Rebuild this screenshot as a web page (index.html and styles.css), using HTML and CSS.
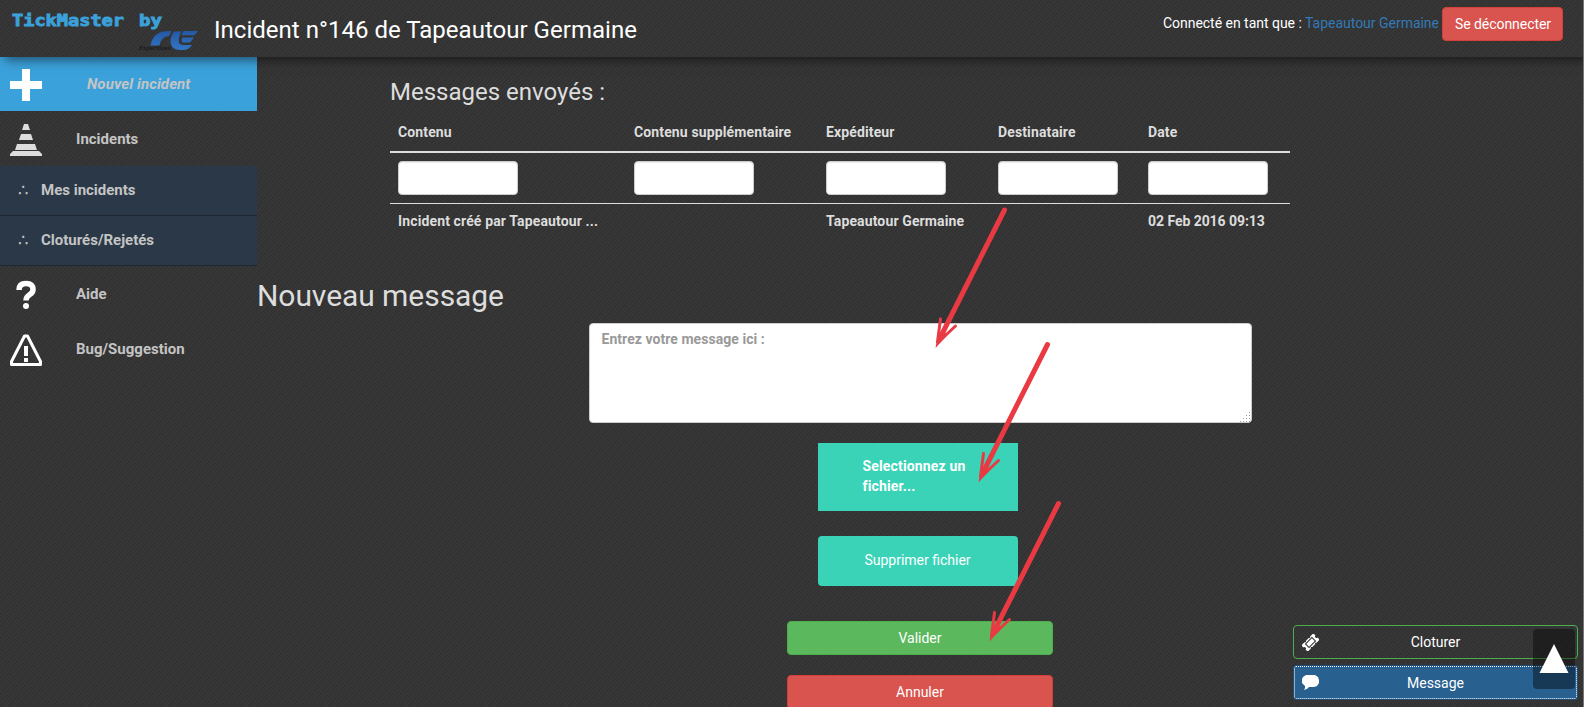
FILE: index.html
```html
<!DOCTYPE html>
<html lang="fr">
<head>
<meta charset="utf-8">
<title>TickMaster</title>
<link rel="stylesheet" href="styles.css">
</head>
<body>
<header class="topbar">
  <svg class="logo" width="202" height="57" viewBox="0 0 202 57">
    <text class="brand" x="12" y="26" textLength="112" lengthAdjust="spacingAndGlyphs">TickMaster</text>
    <text class="brand" x="139" y="26" textLength="23" lengthAdjust="spacingAndGlyphs">by</text>
    <defs><linearGradient id="cle" gradientUnits="userSpaceOnUse" x1="0" y1="31" x2="0" y2="50"><stop offset="0" stop-color="#2457a4"/><stop offset="1" stop-color="#3476c4"/></linearGradient></defs>
    <g fill="url(#cle)">
      <path d="M150.500 45.500Q152 34 163 31.500L171.500 31 169 36Q161 36.500 159.500 45.500z"/>
      <path d="M174 31.500h7.500Q178 38 179 42.500 180 45 184 45H192Q189 50 183 50H179Q171 49 170.500 42 170.500 36 174 31.500z"/>
      <path d="M183.500 31H198.500L194.500 35.200H181.500zM182.500 37.500H194L190 42.500H182Q181 40 182.500 37.500z"/>
    </g>
    <text class="tagline" x="139" y="50" textLength="32" lengthAdjust="spacingAndGlyphs">Expertises</text>
  </svg>
  <h1 class="page-title">Incident n°146 de Tapeautour Germaine</h1>
  <div class="session">
    <span class="who">Connecté en tant que : <a>Tapeautour Germaine</a></span>
    <button class="btn danger logout">Se déconnecter</button>
  </div>
</header>
<div class="layout">
  <nav class="sidebar">
    <a class="item active">
      <svg width="32" height="32" viewBox="0 0 32 32"><path fill="#fff" d="M12 0h8v12h12v8H20v12h-8V20H0v-8h12z"/></svg>
      <span>Nouvel incident</span>
    </a>
    <a class="item">
      <svg width="32" height="32" viewBox="0 0 32 32"><g fill="#ddd"><path d="M14 0h4l2 6h-8zM11 10h10l2 6H9zM7 20h18l2 6H5zM3 27h26l3 3v2H0v-2z"/></g></svg>
      <span>Incidents</span>
    </a>
    <a class="sub"><i>∴</i>Mes incidents</a>
    <a class="sub"><i>∴</i>Cloturés/Rejetés</a>
    <a class="item">
      <svg width="32" height="32" viewBox="0 0 32 32"><path fill="none" stroke="#fff" stroke-width="5.5" d="M9 11q0-6.500 7-6.500t7 6q0 3-3.500 5.300T16 21.500"/><circle cx="16" cy="27" r="3" fill="#fff"/></svg>
      <span>Aide</span>
    </a>
    <a class="item">
      <svg width="32" height="32" viewBox="0 0 32 32"><path fill="none" stroke="#fff" stroke-width="3" stroke-linejoin="round" d="M14.500 2h3L30.500 27.500v3h-29v-3z"/><path fill="#fff" d="M14 12h4v10h-4zM14 24h4v4h-4z"/></svg>
      <span>Bug/Suggestion</span>
    </a>
  </nav>
  <main class="content">
    <section class="messages">
      <h3>Messages envoyés :</h3>
      <div class="row head"><span>Contenu</span><span>Contenu supplémentaire</span><span>Expéditeur</span><span>Destinataire</span><span>Date</span></div>
      <div class="row filters"><span><input></span><span><input></span><span><input></span><span><input></span><span><input></span></div>
      <div class="row entry"><span>Incident créé par Tapeautour ...</span><span></span><span>Tapeautour Germaine</span><span></span><span class="date">02 Feb 2016 09:13</span></div>
    </section>
    <h2>Nouveau message</h2>
    <form class="compose">
      <div class="field">
        <textarea placeholder="Entrez votre message ici :"></textarea>
        <svg class="grip" width="11" height="11" viewBox="0 0 11 11"><path stroke="#999" stroke-dasharray="1 2" d="M9.500 1v10M6.500 4v7M3.500 7v4M.5 10v1"/></svg>
      </div>
      <label class="file">Selectionnez un fichier...</label>
      <button type="button" class="remove">Supprimer fichier</button>
      <button type="button" class="btn success wide">Valider</button>
      <button type="button" class="btn danger wide">Annuler</button>
    </form>
  </main>
</div>
<aside class="actions">
  <button class="btn close">
    <svg width="17" height="17" viewBox="0 0 17 17"><g transform="rotate(-45 8.500 8.500)"><path fill="#fff" d="M0 4h4.500l1 1 1-1h4l1 1 1-1H17v3a1.500 1.500 0 0 0 0 3v3h-4.500l-1-1-1 1h-4l-1-1-1 1H0v-3a1.500 1.500 0 0 0 0-3z"/><rect x="4" y="6" width="9" height="5" fill="none" stroke="#333"/></g></svg>
    <span>Cloturer</span>
  </button>
  <button class="btn message">
    <svg width="17" height="17" viewBox="0 0 17 17"><path fill="#fff" d="M4 1h9l3 2 1 3v3l-2 3-3 1H7q-1 2-5 3 1.500-2 1-4L0 9V5l1-2z"/></svg>
    <span>Message</span>
  </button>
</aside>
<a class="to-top"><svg width="30" height="30" viewBox="0 0 30 30"><path fill="#fff" d="M15 0L29.500 29H.5z"/></svg></a>
<svg class="arrows" width="1584" height="707" viewBox="0 0 1584 707">
  <defs>
    <g id="arrow" fill="none" stroke="#e93a43" stroke-linecap="round">
      <path stroke-width="5" d="M69-137L6-12"/>
      <path stroke-width="3" d="M5-28L2-5M20-21L3-5"/>
      <path fill="#e93a43" stroke="none" d="M0 1L2-11 8-16 12-12z"/>
    </g>
  </defs>
  <use href="#arrow" x="935.500" y="347"/>
  <use href="#arrow" x="978.500" y="481.500"/>
  <use href="#arrow" x="989.500" y="640.500"/>
</svg>
</body>
</html>
```
FILE: styles.css
```css
* { box-sizing: border-box; }
body {
  margin: 0;
  height: 707px;
  overflow: hidden;
  position: relative;
  border-right: 1px solid #777;
  font: 14px/20px Roboto, sans-serif;
  color: #ddd;
}
body, .topbar {
  background:
    repeating-linear-gradient(135deg, rgba(255,255,255,.03) 0 1px, transparent 1px 2.828px),
    repeating-linear-gradient(128deg, rgba(0,0,0,.03) 0 2px, transparent 2px 7px),
    #323232;
}
h1, h2, h3 { margin: 0; font-weight: 400; }
button, input, textarea { font: inherit; }
.topbar {
  position: relative;
  height: 57px;
  display: flex;
  box-shadow: 5px 3px 10px rgba(0,0,0,.5);
}
.brand { font: bold 15.5px "DejaVu Sans Mono", monospace; fill: #3ba1da; stroke: #3ba1da; stroke-width: .9; }
.tagline { font: italic bold 6px "DejaVu Sans", sans-serif; fill: #1d2024; }
.page-title { margin-left: 12px; font-size: 24px; line-height: 60px; letter-spacing: .02px; color: #fff; }
.session { margin-left: auto; padding: 7px 20px 0 0; display: flex; gap: 3px; color: #fff; }
.who { line-height: 32px; letter-spacing: -.02px; }
.who a { color: #337ab7; }
.btn { height: 34px; border: 1px solid; border-radius: 4px; color: #fff; padding: 0 12px; }
.danger { background: #d9534f; border-color: #d43f3a; }
.success { background: #5cb85c; border-color: #4cae4c; }
.logout { width: 121px; padding: 0 0 0 1px; letter-spacing: -.05px; }
.layout { display: flex; }
.sidebar { width: 257px; flex: none; font-size: 15px; font-weight: 700; color: #c4c4c4; }
.item { height: 55px; padding: 2px 0 0 10px; display: flex; align-items: center; gap: 34px; }
.item span { line-height: 20px; padding-bottom: 1px; }
.active { height: 54px; background: #3ba1da; font-style: italic; gap: 45px; padding-top: 1px; letter-spacing: .1px; }
.sub { height: 50px; padding: 0 0 2px 18px; display: flex; align-items: center; background: #2a3847; border-bottom: 1px solid #1e262f; }
.sub + .sub { height: 50px; }
.sub i { width: 23px; font: 17px/20px "DejaVu Sans", sans-serif; }
.content { flex: 1; }
.messages { width: 900px; margin: 21px 0 0 133px; }
.messages h3 { font-size: 24px; line-height: 28px; height: 38px; }
.row { display: grid; grid-template-columns: 236px 192px 172px 150px 150px; font-weight: 700; letter-spacing: .13px; }
.row span { padding: 8px; min-height: 36px; }
.head { border-bottom: 2px solid #ddd; height: 37px; }
.head span { padding-top: 6px; }
.row.entry span { padding-top: 7px; }
.row .date { letter-spacing: -.05px; }
.filters { height: 51px; border-bottom: 1px solid #ddd; }
.filters input { display: block; width: 120px; height: 34px; border: 1px solid #ccc; border-radius: 4px; background: #fff; box-shadow: inset 0 1px 1px rgba(0,0,0,.08); }
.content h2 { font-size: 30px; line-height: 33px; margin-top: 39px; letter-spacing: -.06px; }
.compose { display: flex; flex-direction: column; align-items: center; padding-top: 11px; }
.field { position: relative; width: 663px; height: 100px; }
.field textarea { display: block; width: 100%; height: 100%; padding: 5px 12px; border: 1px solid #ccc; border-radius: 4px; background: #fff; font-weight: 700; letter-spacing: .05px; resize: none; }
.field textarea::placeholder { color: #999; }
.grip { position: absolute; right: 1px; bottom: 1px; }
.file { width: 200px; height: 68px; margin: 20px 5px 25px 0; padding: 13px 45px; background: #3ad3b7; color: #fff; font-weight: 700; letter-spacing: .15px; }
.remove { width: 200px; height: 50px; margin: 0 5px 35px 0; padding-bottom: 3px; border: 0; border-radius: 4px; background: #3ad3b7; color: #fff; }
.wide { width: 266px; flex: none; margin-bottom: 20px; }
.actions { position: absolute; left: 1293px; top: 625px; width: 285px; display: flex; flex-direction: column; gap: 7px; }
.actions .btn { display: flex; align-items: center; padding: 0 8px; }
.actions span { flex: 1; padding-right: 17px; }
.close { background: transparent; border-color: #4cae4c; }
.actions .message { background: #286090; border: 1px dotted #fff; border-radius: 2px; height: 33px; padding: 0 7px; outline: 1px solid #204d74; margin: 0 1px; }
.to-top { position: absolute; left: 1533px; top: 629px; width: 42px; height: 60px; border-radius: 4px; background: rgba(0,0,0,.4); display: flex; align-items: center; justify-content: center; }
.arrows { position: absolute; left: 0; top: 0; pointer-events: none; }
```
